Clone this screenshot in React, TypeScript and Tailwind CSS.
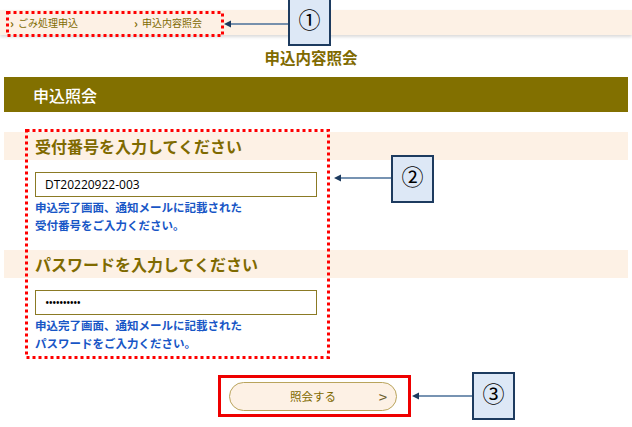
import React from "react";

const gold = "text-[#7f6a00]";

function Callout({ n, className }: { n: string; className: string }) {
  return (
    <div
      className={`absolute w-[43px] h-[48px] bg-[#dde8f6] border-2 border-[#1d3b5f] flex justify-center pt-[5px] text-[22px] leading-[26px] text-black ${className}`}
    >
      {n}
    </div>
  );
}

function Field({
  title,
  value,
  lines,
  password,
}: {
  title: string;
  value: string;
  lines: string[];
  password?: boolean;
}) {
  return (
    <div>
      <div className="mx-[4px] h-[28px] bg-[#fdf1e5] flex items-center pl-[31px]">
        <h3 className={`text-[16px] font-bold ${gold}`}>{title}</h3>
      </div>
      <div className="pl-[35px] w-[317px]">
        <input
          readOnly
          type={password ? "password" : "text"}
          value={value}
          className={`mt-[12px] block w-[282px] h-[25px] border border-[#8b7a24] px-[9px] text-[12px] text-black outline-none ${
            password ? "tracking-[-1px]" : ""
          }`}
          style={{ fontFamily: "'Open Sans', 'Noto Sans', sans-serif" }}
        />
        <div className="text-[11.5px] font-bold leading-[18px] text-[#1856c6] pt-[1px]">
          {lines.map((l) => (
            <p key={l}>{l}</p>
          ))}
        </div>
      </div>
    </div>
  );
}

export default function App() {
  return (
    <div
      className="relative w-[632px] h-[427px] bg-white overflow-hidden"
      style={{ fontFamily: "'Noto Sans CJK JP', 'Noto Sans', sans-serif" }}
    >
      {/* breadcrumb */}
      <div className={`mt-[10px] h-[25px] bg-[#fdf1e5] shadow-[0_2px_3px_rgba(0,0,0,0.15)] flex items-center text-[10px] ${gold}`}>
        <span className="ml-[10px] w-[124px] flex items-center gap-[4px]">
          <span className="text-[12px] font-bold">›</span>
          <span>ごみ処理申込</span>
        </span>
        <span className="flex items-center gap-[4px]">
          <span className="text-[12px] font-bold">›</span>
          <span>申込内容照会</span>
        </span>
      </div>

      {/* title */}
      <h1 className={`mt-[11px] h-[22px] text-center pr-[10px] text-[15.5px] font-bold leading-[22px] ${gold}`}>
        申込内容照会
      </h1>

      {/* header bar */}
      <div className="mt-[9px] mx-[4px] h-[35px] bg-[#827000] flex items-center pl-[29px] text-[16px] font-medium text-white">
        申込照会
      </div>

      <div className="mt-[20px]">
        <Field
          title="受付番号を入力してください"
          value="DT20220922-003"
          lines={["申込完了画面、通知メールに記載された", "受付番号をご入力ください。"]}
        />
        <div className="mt-[16px]">
          <Field
            title="パスワードを入力してください"
            value="••••••••••"
            password
            lines={["申込完了画面、通知メールに記載された", "パスワードをご入力ください。"]}
          />
        </div>
      </div>

      {/* button */}
      <div className="mt-[30px] flex justify-center pr-[6px]">
        <button className="relative w-[168px] h-[29px] rounded-full bg-[#fdf1e5] border border-[#b9a45c] text-[11.5px] text-[#7f6a00]">
          照会する
          <span className="absolute right-[9px] top-1/2 -translate-y-1/2 text-[15px] text-[#6e6230]">&gt;</span>
        </button>
      </div>

      {/* annotations */}
      <svg className="absolute inset-0 pointer-events-none" width="632" height="427">
        <rect x="7.5" y="12.5" width="215" height="23" fill="none" stroke="#ff0000" strokeWidth="3" strokeDasharray="3 3" />
        <rect x="26.5" y="130.5" width="302" height="227" fill="none" stroke="#ff0000" strokeWidth="3" strokeDasharray="3 3" />
        <rect x="219.5" y="376.5" width="190" height="39" fill="none" stroke="#ee0000" strokeWidth="3" />

        <line x1="288" y1="24" x2="230" y2="24" stroke="#4a6f98" strokeWidth="1.5" />
        <polygon points="224,24 231,20.5 231,27.5" fill="#1d3b5f" />

        <line x1="391" y1="178" x2="340" y2="178" stroke="#4a6f98" strokeWidth="1.5" />
        <polygon points="334,178 341,174.5 341,181.5" fill="#1d3b5f" />

        <line x1="472" y1="396" x2="418" y2="396" stroke="#4a6f98" strokeWidth="1.5" />
        <polygon points="412,396 419,392.5 419,399.5" fill="#1d3b5f" />
      </svg>

      <Callout n="①" className="left-[288px] top-[-2px]" />
      <Callout n="②" className="left-[391px] top-[155px]" />
      <Callout n="③" className="left-[472px] top-[372px]" />
    </div>
  );
}
